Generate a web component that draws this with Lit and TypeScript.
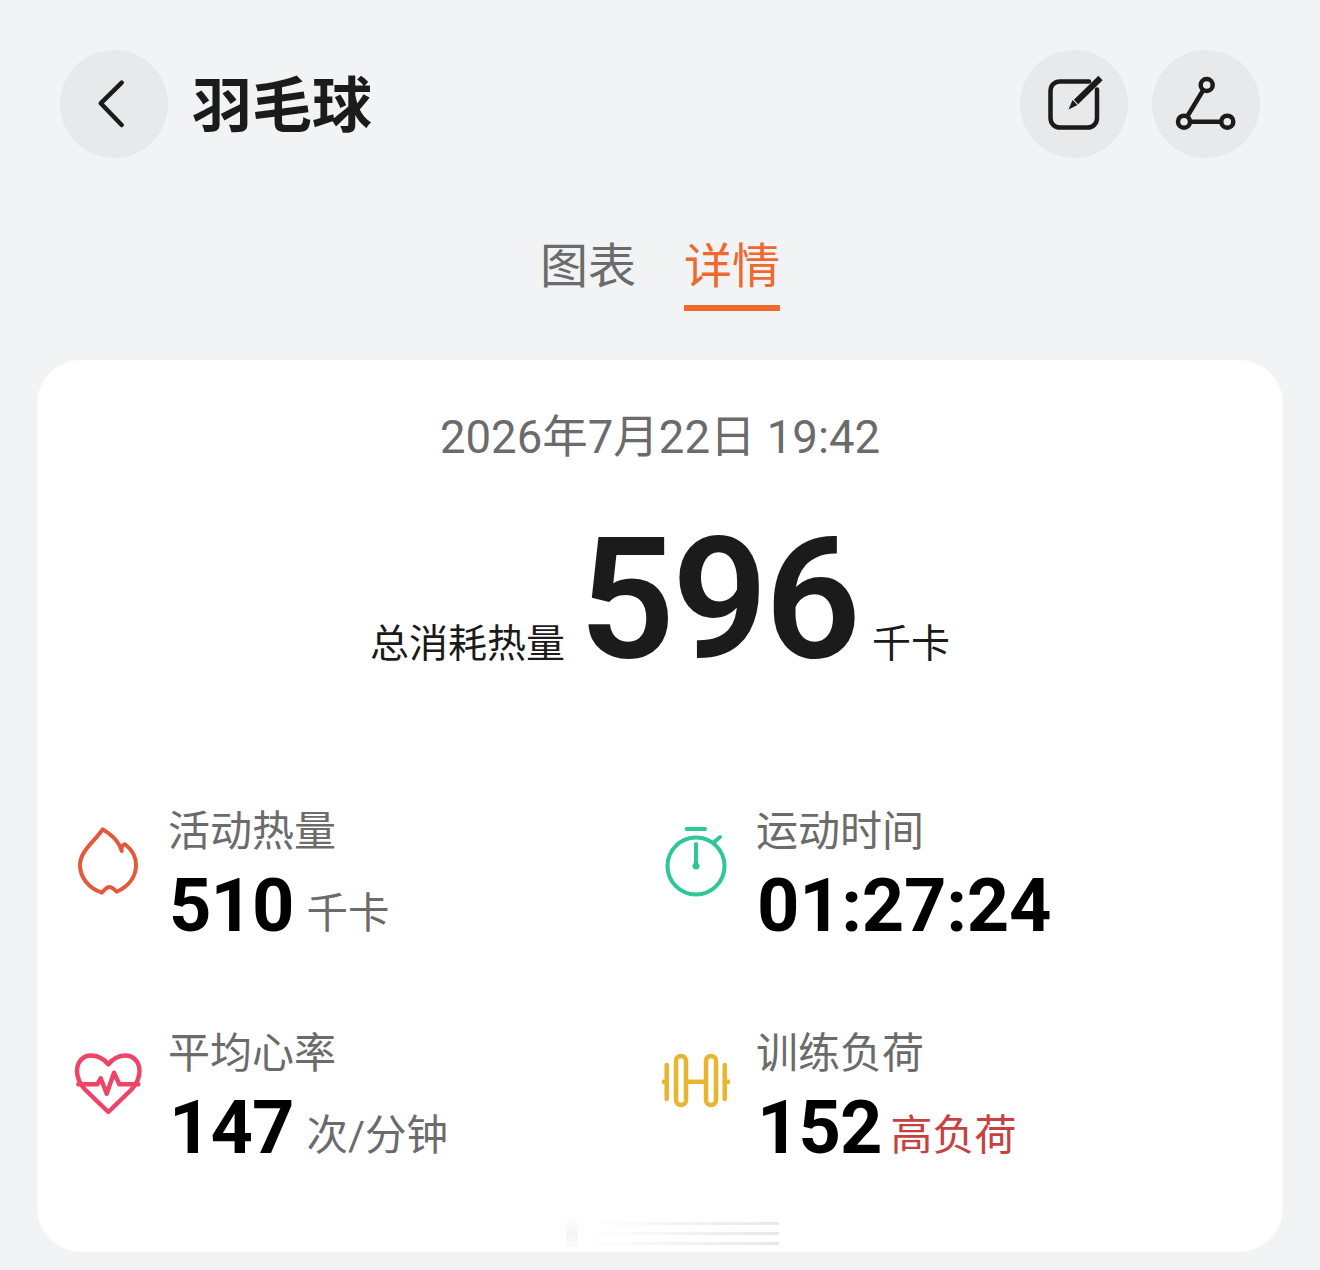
import { LitElement, css, html, svg } from "lit";
import { customElement } from "lit/decorators.js";

type Metric = {
  label: string;
  value: string;
  unit?: string;
  alert?: boolean;
  icon: ReturnType<typeof svg>;
};

const flame = svg`<path d="M28.7 4.3C35 8.5 44 14 47.7 26C47 23 48 20 51 19.3C57 24 62 31 62 40C62 53 53 62 42.7 66.7C40 64 38 62 35.3 62C32 62 30.5 65.5 27.7 67.7C15 63 6 53 6 40C6 26 20 17 28.7 4.3Z" fill="none" stroke="#e5583a" stroke-width="4" stroke-linejoin="round" stroke-linecap="round"/>`;

const stopwatch = svg`<g fill="none" stroke="#2ec795" stroke-width="4" stroke-linecap="round">
  <circle cx="34" cy="41" r="28.5"/>
  <path d="M24.7 4H43"/>
  <path d="M51.3 17.7L58 12"/>
  <path d="M34 19V41"/>
</g><circle cx="34" cy="41" r="3.5" fill="#2ec795"/>`;

const heart = svg`<g fill="none" stroke="#ee4468" stroke-linejoin="round" stroke-linecap="round">
  <path stroke-width="4.5" d="M34.3 17.3C29 11 23 8.5 17 8.5C8.5 8.5 3 15.5 3 24C3 31 6 37 11 42.5L34.3 65L57.5 42.5C62.5 37 65.5 31 65.5 24C65.5 15.5 60 8.5 51.5 8.5C45.5 8.5 39.5 11 34.3 17.3Z"/>
  <path stroke-width="4.5" d="M4.3 37.3H23.3L26.7 31.3L32.7 46.7L40 25.7L45.3 37.3H64.3"/>
</g>`;

const dumbbell = svg`<g fill="none" stroke="#e8b52f" stroke-width="4.5" stroke-linecap="round">
  <rect x="14" y="9" width="10" height="49" rx="5"/>
  <rect x="44" y="9" width="10" height="49" rx="5"/>
  <path d="M24 34.7H44"/>
  <path d="M4.7 18V52M62.7 18V52"/>
  <path d="M1.5 34.7H4.7M62.7 34.7H66.5"/>
</g>`;

const metrics: Metric[] = [
  { label: "活动热量", value: "510", unit: "千卡", icon: flame },
  { label: "运动时间", value: "01:27:24", icon: stopwatch },
  { label: "平均心率", value: "147", unit: "次/分钟", icon: heart },
  { label: "训练负荷", value: "152", unit: "高负荷", alert: true, icon: dumbbell },
];

@customElement("app-root")
export class AppRoot extends LitElement {
  renderMetric(item: Metric) {
    return html`<div class="metric">
      <svg class="metric-icon" viewBox="0 0 68 72">${item.icon}</svg>
      <div>
        <div class="metric-label">${item.label}</div>
        <div class="metric-value"><span class="num ${item.unit ? "" : "wide"}">${item.value}</span>${item.unit
            ? html`<span class="unit ${item.alert ? "alert" : ""}">${item.unit}</span>`
            : ""}</div>
      </div>
    </div>`;
  }

  render() {
    return html`<div class="page">
      <header class="header">
        <button class="round">
          <svg viewBox="0 0 108 108">
            <path class="ico" d="M61.7 32.7L40.7 53.3L61.7 75"/>
          </svg>
        </button>
        <h1 class="title">羽毛球</h1>
        <div class="spacer"></div>
        <button class="round">
          <svg viewBox="0 0 108 108">
            <path class="ico" d="M69 31.5H40C34.5 31.5 30.5 35.5 30.5 41V68C30.5 73.5 34.5 77.5 40 77.5H67.5C73 77.5 77 73.5 77 68V39.5"/>
            <path class="ico pen" d="M80.5 28L56 52"/>
            <path d="M52.5 50L57.5 55L48.5 59.5Z" fill="#1b1b1b"/>
          </svg>
        </button>
        <button class="round">
          <svg viewBox="0 0 108 108">
            <path class="ico" d="M51 40.5L35.5 66M39 71.7H68"/>
            <circle class="ico" cx="54.7" cy="35" r="6"/>
            <circle class="ico" cx="32" cy="71.7" r="6"/>
            <circle class="ico" cx="75.3" cy="71.7" r="6"/>
          </svg>
        </button>
      </header>

      <nav class="tabs">
        <div class="tab">图表</div>
        <div class="tab active">详情</div>
      </nav>

      <section class="card">
        <div class="date">2026年7月22日 19:42</div>
        <div class="hero">
          <span class="hero-label">总消耗热量</span>
          <span class="hero-num">596</span>
          <span class="hero-label">千卡</span>
        </div>
        <div class="grid">${metrics.map((m) => this.renderMetric(m))}</div>
        <div class="mark"></div>
      </section>
    </div>`;
  }

  static styles = css`
    :host {
      display: block;
      font-family: Roboto, "Noto Sans CJK SC", sans-serif;
    }
    .page {
      height: 1270px;
      box-sizing: border-box;
      background: #f1f3f5;
      padding-top: 50px;
      overflow: hidden;
    }
    .header {
      display: flex;
      align-items: center;
      gap: 24px;
      padding: 0 60px;
    }
    .round {
      width: 108px;
      height: 108px;
      padding: 0;
      border: none;
      border-radius: 50%;
      background: #e8e9eb;
    }
    .round svg {
      display: block;
      width: 108px;
      height: 108px;
    }
    .ico {
      fill: none;
      stroke: #1b1b1b;
      stroke-width: 4.5;
      stroke-linecap: round;
      stroke-linejoin: round;
    }
    .pen {
      stroke-width: 6;
      stroke-linecap: butt;
    }
    .title {
      margin: 0 0 6px 0;
      font-family: "Noto Sans CJK SC", sans-serif;
      font-size: 60px;
      line-height: 80px;
      font-weight: 700;
      color: #1b1b1b;
    }
    .spacer {
      flex: 1;
    }
    .tabs {
      display: flex;
      justify-content: center;
      gap: 48px;
      margin-top: 77px;
    }
    .tab {
      font-size: 48px;
      line-height: 60px;
      padding-top: 2px;
      padding-bottom: 8px;
      border-bottom: 6px solid transparent;
      color: #6b6b6b;
    }
    .tab.active {
      color: #ee6a2c;
      border-bottom-color: #ee6a2c;
    }
    .card {
      position: relative;
      height: 892px;
      box-sizing: border-box;
      margin: 49px 37px 0;
      padding-top: 48px;
      background: #fff;
      border-radius: 44px;
    }
    .date {
      text-align: center;
      font-size: 45.5px;
      line-height: 60px;
      color: #6b6b6b;
    }
    .hero {
      display: flex;
      justify-content: center;
      align-items: baseline;
      gap: 14px;
      margin-top: 47px;
      color: #1b1b1b;
    }
    .hero-label {
      font-size: 39px;
    }
    .hero-num {
      font-size: 168px;
      line-height: 170px;
      font-weight: 600;
      letter-spacing: -3px;
    }
    .grid {
      display: grid;
      grid-template-columns: 588px 1fr;
      grid-auto-rows: 222px;
      margin-top: 121px;
      padding-left: 37px;
    }
    .metric {
      display: flex;
      gap: 26px;
    }
    .metric-icon {
      width: 68px;
      height: 72px;
      margin-top: 19px;
      margin-right: 1px;
      flex: none;
    }
    .metric-label {
      font-size: 42px;
      line-height: 52px;
      color: #6b6b6b;
      margin-left: -1px;
    }
    .metric-value {
      margin-top: 6px;
      height: 84px;
      line-height: 84px;
      white-space: nowrap;
    }
    .num {
      font-size: 74px;
      font-weight: 700;
      letter-spacing: -1px;
      color: #000;
    }
    .num.wide {
      letter-spacing: -0.3px;
    }
    .unit {
      margin-left: 13px;
      font-size: 41.5px;
      line-height: 1;
      vertical-align: 3px;
      color: #6b6b6b;
    }
    .unit.alert {
      margin-left: 9px;
      font-size: 42px;
      color: #c8403f;
    }
    .mark {
      position: absolute;
      right: 504px;
      bottom: 0;
      width: 245px;
      height: 36px;
      background:
        linear-gradient(180deg, transparent, #f4f4f4 50%, transparent) 32px 0 / 12px 100% no-repeat,
        linear-gradient(90deg, transparent 20%, #e8e8e8 100%) 0 6px / 100% 3px no-repeat,
        linear-gradient(90deg, transparent 20%, #e8e8e8 100%) 0 16px / 100% 3px no-repeat,
        linear-gradient(90deg, transparent 20%, #e8e8e8 100%) 0 26px / 100% 3px no-repeat;
    }
  `;
}
